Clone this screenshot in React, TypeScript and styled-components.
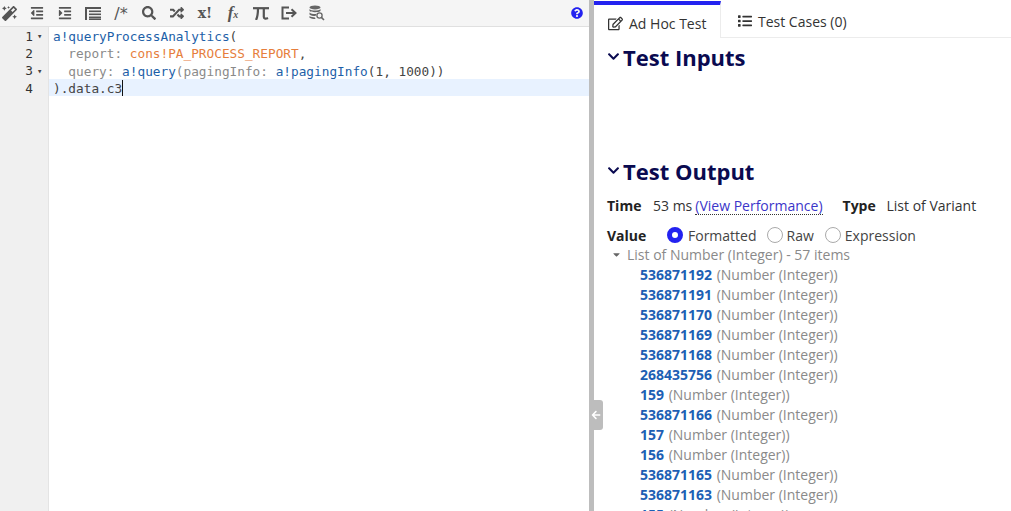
import styled, {createGlobalStyle} from "styled-components";
import {
    FaMagic,
    FaOutdent,
    FaIndent,
    FaSearch,
    FaRandom,
    FaQuestionCircle,
    FaRegEdit,
    FaList,
    FaChevronDown,
    FaCaretDown,
    FaArrowLeft,
} from "react-icons/fa";

const GlobalStyle = createGlobalStyle`
    html, body {
        margin: 0;
        height: 511px;
        overflow: hidden;
        background: #fff;
    }
`;

const LineBlockIcon = () => (
    <svg width="16" height="14" viewBox="0 0 16 14" fill="#555">
        <rect x="0" y="1" width="16" height="2" />
        <rect x="0" y="3" width="2" height="11" />
        <rect x="4" y="4.5" width="12" height="1.6" />
        <rect x="4" y="7.5" width="12" height="1.6" />
        <rect x="4" y="10.5" width="12" height="1.6" />
        <rect x="4" y="12.4" width="12" height="1.6" />
    </svg>
);

const PiIcon = () => (
    <svg width="16" height="14" viewBox="0 0 16 14" fill="none" stroke="#555" strokeWidth="2.2">
        <path d="M0 2.2 H16" />
        <path d="M5 2 C5 7 4.6 11 3 14" />
        <path d="M10.8 2 V11 C10.8 13 13 13 15 12" />
    </svg>
);

const ExitIcon = () => (
    <svg width="16" height="14" viewBox="0 0 16 14" fill="none" stroke="#555" strokeWidth="2">
        <path d="M8 1.5 H1.5 V12.5 H8" />
        <path d="M5 7 H14" />
        <path d="M10.5 3.2 L14.5 7 L10.5 10.8" />
    </svg>
);

const DataSearchIcon = () => (
    <svg width="16" height="16" viewBox="0 0 16 16" fill="#666">
        <ellipse cx="6" cy="2.4" rx="5.5" ry="2" />
        <path d="M0.5 4 C2 6 10 6 11.5 4 V6 C10 7.6 2 7.6 0.5 6 Z" />
        <path d="M0.5 7.5 C2 9 6 9.2 7.5 8.8 L6.5 11 C4 11 2 10.6 0.5 9.5 Z" />
        <path d="M0.5 11 C2 12 4 12.4 6 12.4 L6.5 14 C4 14 2 13.6 0.5 12.8 Z" />
        <circle cx="10.5" cy="10.5" r="2.6" fill="none" stroke="#666" strokeWidth="1.3" />
        <path d="M12.4 12.4 L15 15" stroke="#666" strokeWidth="1.6" />
    </svg>
);

const outputRows = [
    "536871192",
    "536871191",
    "536871170",
    "536871169",
    "536871168",
    "268435756",
    "159",
    "536871166",
    "157",
    "156",
    "536871165",
    "536871163",
    "155",
];

const App = () => {
    return (
        <Page>
            <GlobalStyle />
            <EditorPane>
                <Toolbar>
                    <ToolGroup>
                        <ToolIcon><FaMagic size={15} /></ToolIcon>
                        <ToolIcon><FaOutdent size={14} /></ToolIcon>
                        <ToolIcon><FaIndent size={14} /></ToolIcon>
                        <ToolIcon><LineBlockIcon /></ToolIcon>
                        <ToolText>/*</ToolText>
                        <ToolIcon><FaSearch size={14} /></ToolIcon>
                        <ToolIcon><FaRandom size={14} /></ToolIcon>
                        <ToolBang>x!</ToolBang>
                        <ToolFx>f<small>x</small></ToolFx>
                        <ToolIcon><PiIcon /></ToolIcon>
                        <ToolIcon><ExitIcon /></ToolIcon>
                        <ToolIcon><DataSearchIcon /></ToolIcon>
                    </ToolGroup>
                    <HelpIcon><FaQuestionCircle size={12} /></HelpIcon>
                </Toolbar>
                <CodeArea>
                    <Gutter>
                        <GutterLine>1<Fold>▾</Fold></GutterLine>
                        <GutterLine>2<Fold /></GutterLine>
                        <GutterLine>3<Fold>▾</Fold></GutterLine>
                        <GutterLine>4<Fold /></GutterLine>
                    </Gutter>
                    <Code>
                        <CodeLine>
                            <Fn>a!queryProcessAnalytics</Fn><Punct>(</Punct>
                        </CodeLine>
                        <CodeLine>
                            {"  "}<Param>report:</Param>{" "}<Const>cons!PA_PROCESS_REPORT</Const><Punct>,</Punct>
                        </CodeLine>
                        <CodeLine>
                            {"  "}<Param>query:</Param>{" "}<Fn>a!query</Fn><Param>(pagingInfo:</Param>{" "}
                            <Fn>a!pagingInfo</Fn><Punct>(1, 1000))</Punct>
                        </CodeLine>
                        <CodeLine $active>
                            <Punct>).data.c3</Punct><Caret />
                        </CodeLine>
                    </Code>
                </CodeArea>
            </EditorPane>
            <Splitter>
                <SplitterHandle><FaArrowLeft size={10} /></SplitterHandle>
            </Splitter>
            <ResultPane>
                <Tabs>
                    <Tab $active><FaRegEdit size={15} />Ad Hoc Test</Tab>
                    <Tab><FaList size={14} />Test Cases (0)</Tab>
                </Tabs>
                <Section>
                    <SectionTitle><FaChevronDown size={13} />Test Inputs</SectionTitle>
                </Section>
                <OutputSection>
                    <SectionTitle><FaChevronDown size={13} />Test Output</SectionTitle>
                    <MetaRow>
                        <MetaLabel>Time</MetaLabel>
                        <MetaValue>53 ms</MetaValue>
                        <PerfLink>(View Performance)</PerfLink>
                        <TypeLabel>Type</TypeLabel>
                        <MetaValue>List of Variant</MetaValue>
                    </MetaRow>
                    <ValueRow>
                        <ValueLabel>Value</ValueLabel>
                        <RadioOption><Radio $checked />Formatted</RadioOption>
                        <RadioOption><Radio />Raw</RadioOption>
                        <RadioOption><Radio />Expression</RadioOption>
                    </ValueRow>
                    <ListHeader><FaCaretDown size={11} />List of Number (Integer) - 57 items</ListHeader>
                    {outputRows.map((value, index) => (
                        <OutputRow key={index}>
                            <OutputValue>{value}</OutputValue> (Number (Integer))
                        </OutputRow>
                    ))}
                </OutputSection>
            </ResultPane>
        </Page>
    );
};

const Page = styled.div`
    display: flex;
    width: 1011px;
    height: 511px;
    overflow: hidden;
    font-family: "Open Sans", sans-serif;
`;

const EditorPane = styled.div`
    display: flex;
    flex-direction: column;
    width: 589px;
    flex-shrink: 0;
`;

const Toolbar = styled.div`
    display: flex;
    align-items: center;
    justify-content: space-between;
    height: 26px;
    padding: 0 6px 0 0;
    background: #f5f5f5;
    border-bottom: 1px solid #e0e0e0;
`;

const ToolGroup = styled.div`
    display: flex;
    align-items: center;
`;

const ToolIcon = styled.span`
    display: flex;
    align-items: center;
    justify-content: center;
    width: 28px;
    height: 24px;
    color: #555;
    &:first-child {
        width: 18px;
        margin-right: 5px;
    }
`;

const ToolText = styled.span`
    width: 28px;
    text-align: center;
    font-family: "DejaVu Sans", sans-serif;
    font-size: 16px;
    color: #555;
`;

const ToolBang = styled.span`
    width: 28px;
    text-align: center;
    font-family: "DejaVu Serif", serif;
    font-size: 14px;
    font-weight: 700;
    color: #555;
`;

const ToolFx = styled.span`
    width: 28px;
    text-align: center;
    font-family: "Liberation Serif", serif;
    font-size: 17px;
    font-weight: 700;
    font-style: italic;
    color: #555;
    small {
        font-size: 10px;
    }
`;

const HelpIcon = styled.span`
    display: flex;
    color: #2322f0;
`;

const CodeArea = styled.div`
    display: flex;
    flex: 1;
    background: #fff;
`;

const Gutter = styled.div`
    width: 48px;
    flex-shrink: 0;
    background: #f0f0f0;
    border-right: 1px solid #e4e4e4;
`;

const GutterLine = styled.div`
    display: flex;
    justify-content: flex-end;
    align-items: center;
    box-sizing: border-box;
    height: 17.35px;
    padding-top: 1px;
    font-family: "DejaVu Sans Mono", monospace;
    font-size: 12.75px;
    color: #333;
`;

const Fold = styled.span`
    width: 15px;
    padding-left: 4px;
    box-sizing: border-box;
    font-size: 9px;
    color: #444;
`;

const Code = styled.div`
    flex: 1;
`;

const CodeLine = styled.div<{$active?: boolean}>`
    height: 17.35px;
    line-height: 19.4px;
    padding-left: 4px;
    white-space: pre;
    font-family: "DejaVu Sans Mono", monospace;
    font-size: 12.75px;
    background: ${(props) => (props.$active ? "#e8f2ff" : "transparent")};
`;

const Fn = styled.span`
    color: #1d5fa8;
`;

const Param = styled.span`
    color: #8a8a8a;
`;

const Const = styled.span`
    color: #e67e3c;
`;

const Punct = styled.span`
    color: #444;
`;

const Caret = styled.span`
    display: inline-block;
    width: 1px;
    height: 16px;
    vertical-align: -3px;
    background: #111;
`;

const Splitter = styled.div`
    position: relative;
    width: 5px;
    flex-shrink: 0;
    background: #bdbdbd;
`;

const SplitterHandle = styled.div`
    position: absolute;
    top: 400px;
    left: 0;
    display: flex;
    align-items: center;
    justify-content: center;
    width: 14px;
    height: 30px;
    border-radius: 0 3px 3px 0;
    background: #bdbdbd;
    color: #fff;
`;

const ResultPane = styled.div`
    flex: 1;
    min-width: 0;
    background: #fff;
`;

const Tabs = styled.div`
    display: flex;
    height: 37px;
    border-bottom: 1px solid #ececec;
`;

const Tab = styled.div<{$active?: boolean}>`
    display: flex;
    align-items: center;
    gap: 6px;
    box-sizing: border-box;
    height: ${(props) => (props.$active ? "37px" : "36px")};
    width: ${(props) => (props.$active ? "127px" : "auto")};
    padding: 4px 0 0 ${(props) => (props.$active ? "14px" : "17px")};
    margin-top: 1px;
    font-size: 14px;
    color: #333;
    background: #fff;
    border-top: ${(props) => (props.$active ? "4px solid #2322f0" : "none")};
    border-right: ${(props) => (props.$active ? "1px solid #ececec" : "none")};
`;

const Section = styled.div`
    height: 107px;
    padding: 5px 0 0 13px;
`;

const OutputSection = styled.div`
    padding: 7px 0 0 13px;
`;

const SectionTitle = styled.h2`
    display: flex;
    align-items: center;
    gap: 3px;
    margin: 0;
    height: 27px;
    font-size: 22px;
    font-weight: 700;
    color: #0a0a50;
`;

const MetaRow = styled.div`
    display: flex;
    align-items: baseline;
    height: 20px;
    margin-top: 12px;
    font-size: 14px;
    color: #333;
`;

const MetaLabel = styled.span`
    width: 46px;
    font-weight: 700;
    color: #222;
`;

const MetaValue = styled.span`
    margin-right: 3px;
`;

const PerfLink = styled.span`
    color: #3b35c9;
    border-bottom: 1px dotted #333;
    line-height: 17px;
`;

const TypeLabel = styled.span`
    width: 44px;
    margin-left: 20px;
    font-weight: 700;
    color: #222;
`;

const ValueRow = styled.div`
    display: flex;
    align-items: center;
    height: 20px;
    margin-top: 9px;
    font-size: 14px;
    color: #444;
`;

const ValueLabel = styled.span`
    width: 60px;
    font-weight: 700;
    color: #222;
`;

const RadioOption = styled.span`
    display: flex;
    align-items: center;
    gap: 4px;
    margin-right: 11px;
    &:nth-child(2) {
        margin-right: 10px;
    }
`;

const Radio = styled.span<{$checked?: boolean}>`
    display: block;
    box-sizing: border-box;
    width: 16px;
    height: 16px;
    margin-right: ${(props) => (props.$checked ? "1px" : "0")};
    border-radius: 50%;
    border: ${(props) => (props.$checked ? "5px solid #2322f0" : "1px solid #aaa")};
    background: #fff;
`;

const ListHeader = styled.div`
    display: flex;
    align-items: center;
    gap: 5px;
    box-sizing: border-box;
    height: 20px;
    padding: 0 0 2px 4px;
    font-size: 14px;
    color: #8a8a8a;
    svg {
        color: #666;
    }
`;

const OutputRow = styled.div`
    height: 20px;
    line-height: 20px;
    padding-left: 33px;
    white-space: nowrap;
    font-size: 14px;
    color: #8a8a8a;
`;

const OutputValue = styled.span`
    margin-right: 1px;
    font-weight: 700;
    color: #1d5fb4;
`;

export default App;
